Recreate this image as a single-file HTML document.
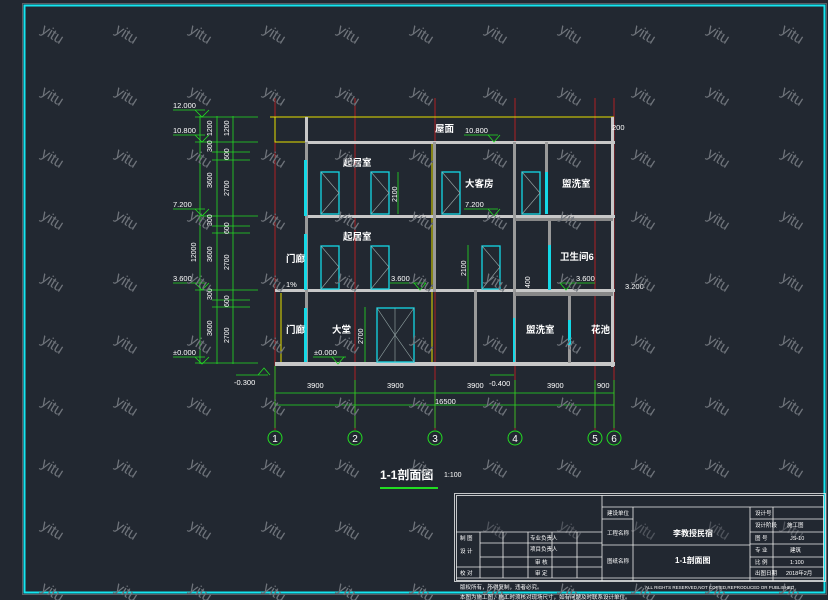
<!DOCTYPE html>
<html><head><meta charset="utf-8"><style>
html,body{margin:0;padding:0;background:#222831;}
svg{display:block;}
text{font-family:"Liberation Sans","Noto Sans CJK SC",sans-serif;}
</style></head><body>
<svg width="828" height="600" viewBox="0 0 828 600" xmlns="http://www.w3.org/2000/svg">
<defs>
<pattern id="wm" x="0" y="0" width="74" height="62" patternUnits="userSpaceOnUse">
<text x="0" y="0" transform="translate(40,32) rotate(32)" font-size="15" fill="#6f747b" font-family="Liberation Sans, sans-serif">yitu</text>
</pattern>
</defs>
<rect width="828" height="600" fill="#222831"/>
<rect x="22.5" y="3.5" width="804" height="591" fill="none" stroke="#5a5f66" stroke-width="1"/>
<rect x="24.5" y="5.5" width="800" height="587" fill="none" stroke="#14e6f0" stroke-width="2"/>

<!-- axis lines red -->
<g stroke="#d42020" stroke-width="0.8">
<line x1="275" y1="98" x2="275" y2="430"/><line x1="355" y1="98" x2="355" y2="430"/>
<line x1="435" y1="98" x2="435" y2="430"/><line x1="515" y1="98" x2="515" y2="430"/>
<line x1="595" y1="98" x2="595" y2="430"/><line x1="614" y1="98" x2="614" y2="430"/>
</g>

<!-- roof parapet yellow -->
<g fill="none" stroke="#e8e000" stroke-width="1">
<line x1="270" y1="117" x2="614" y2="117"/>
<polyline points="275,117 275,142 305,142"/>
<line x1="432" y1="142" x2="432" y2="363"/>
<line x1="281" y1="293" x2="281" y2="362"/>
</g>
<!-- slabs -->
<g fill="#c8c8c8">
<rect x="305" y="141" width="310" height="3"/>
<rect x="305" y="215" width="310" height="3"/>
<rect x="275" y="289" width="340" height="3"/>
<rect x="275" y="362" width="340" height="4"/>
<rect x="305" y="117" width="3" height="25"/>
<rect x="611" y="117" width="3" height="250"/>
<rect x="305" y="142" width="3" height="220" fill="#9a9a9a"/>
<rect x="433" y="142" width="3" height="150" fill="#9a9a9a"/>
<rect x="513" y="142" width="3" height="220" fill="#9a9a9a"/>
<rect x="545" y="142" width="3" height="70" fill="#9a9a9a"/>
<rect x="548" y="218" width="3" height="72" fill="#9a9a9a"/>
<rect x="474" y="290" width="3" height="72" fill="#9a9a9a"/>
<rect x="568" y="295" width="3" height="68" fill="#9a9a9a"/>
<rect x="515" y="292" width="98" height="4" fill="#888"/>
<rect x="515" y="218" width="98" height="3" fill="#888"/>
</g>
<!-- cyan wall windows -->
<g fill="#14d8e6">
<rect x="304" y="160" width="3" height="56"/>
<rect x="304" y="234" width="3" height="56"/>
<rect x="304" y="308" width="3" height="54"/>
<rect x="545" y="172" width="3" height="42"/>
<rect x="548" y="245" width="3" height="45"/>
<rect x="513" y="318" width="2" height="44"/>
<rect x="568" y="320" width="3" height="25"/>
</g>
<!-- windows -->
<g fill="none" stroke="#14d8e6" stroke-width="1.3">
<rect x="321" y="172" width="18" height="42"/><rect x="371" y="172" width="18" height="42"/>
<rect x="442" y="172" width="18" height="42"/><rect x="522" y="172" width="18" height="42"/>
<rect x="321" y="246" width="18" height="43"/><rect x="371" y="246" width="18" height="43"/>
<rect x="482" y="246" width="18" height="43"/>
<rect x="377" y="308" width="37" height="54"/>
</g>
<g fill="none" stroke="#9aa" stroke-width="0.6">
<polyline points="321,172 339,193 321,214"/><polyline points="371,172 389,193 371,214"/>
<polyline points="442,172 460,193 442,214"/><polyline points="522,172 540,193 522,214"/>
<polyline points="321,246 339,267 321,289"/><polyline points="371,246 389,267 371,289"/>
<polyline points="482,246 500,267 482,289"/>
<line x1="395" y1="308" x2="395" y2="362"/>
<polyline points="377,308 395,335 377,362"/><polyline points="414,308 395,335 414,362"/>
</g>

<!-- dims green -->
<g stroke="#22dd22" stroke-width="0.8" fill="none">
<line x1="200" y1="116" x2="200" y2="364"/><line x1="217" y1="116" x2="217" y2="364"/><line x1="233" y1="116" x2="233" y2="364"/>
<line x1="195" y1="117" x2="258" y2="117"/><line x1="195" y1="142" x2="258" y2="142"/>
<line x1="195" y1="216" x2="258" y2="216"/><line x1="195" y1="290" x2="258" y2="290"/>
<line x1="195" y1="363" x2="258" y2="363"/>
<line x1="212" y1="152" x2="250" y2="152"/><line x1="212" y1="160" x2="250" y2="160"/>
<line x1="212" y1="226" x2="250" y2="226"/><line x1="212" y1="233" x2="250" y2="233"/>
<line x1="212" y1="300" x2="250" y2="300"/><line x1="212" y1="307" x2="250" y2="307"/>
<line x1="173" y1="110" x2="205" y2="110"/><polyline points="195,110 202,117 209,110"/>
<line x1="173" y1="135" x2="205" y2="135"/><polyline points="195,135 202,142 209,135"/>
<line x1="173" y1="209" x2="205" y2="209"/><polyline points="195,209 202,216 209,209"/>
<line x1="173" y1="283" x2="205" y2="283"/><polyline points="195,283 202,290 209,283"/>
<line x1="173" y1="357" x2="205" y2="357"/><polyline points="195,357 202,364 209,357"/>
<line x1="275" y1="393" x2="614" y2="393"/><line x1="275" y1="405" x2="614" y2="405"/>
<line x1="275" y1="366" x2="275" y2="428"/><line x1="355" y1="380" x2="355" y2="428"/>
<line x1="435" y1="380" x2="435" y2="428"/><line x1="515" y1="380" x2="515" y2="428"/>
<line x1="595" y1="380" x2="595" y2="428"/><line x1="614" y1="380" x2="614" y2="428"/>
<line x1="398" y1="172" x2="398" y2="214"/><line x1="468" y1="245" x2="468" y2="289"/>
<line x1="365" y1="307" x2="365" y2="362"/>
<line x1="464" y1="135" x2="498" y2="135"/><polyline points="488,135 494,142 500,135"/>
<line x1="464" y1="209" x2="498" y2="209"/><polyline points="488,209 494,216 500,209"/>
<line x1="390" y1="283" x2="426" y2="283"/><polyline points="414,283 420,290 426,283"/>
<line x1="560" y1="283" x2="595" y2="283"/><polyline points="560,283 566,290 572,283"/>
<line x1="313" y1="357" x2="346" y2="357"/><polyline points="332,357 338,364 344,357"/>
<line x1="236" y1="375" x2="268" y2="375"/><polyline points="258,375 264,368 270,375"/>
<line x1="490" y1="375" x2="514" y2="375"/>
<line x1="380" y1="488" x2="438" y2="488" stroke-width="2"/>
</g>
<g fill="none" stroke="#22dd22" stroke-width="1">
<circle cx="275" cy="438" r="7"/><circle cx="355" cy="438" r="7"/><circle cx="435" cy="438" r="7"/>
<circle cx="515" cy="438" r="7"/><circle cx="595" cy="438" r="7"/><circle cx="614" cy="438" r="7"/>
</g>
<g fill="#fff" font-size="10" text-anchor="middle">
<text x="275" y="442">1</text><text x="355" y="442">2</text><text x="435" y="442">3</text>
<text x="515" y="442">4</text><text x="595" y="442">5</text><text x="614" y="442">6</text>
</g>

<!-- level texts -->
<g fill="#fff" font-size="7.5">
<text x="173" y="108">12.000</text><text x="173" y="133">10.800</text>
<text x="173" y="207">7.200</text><text x="173" y="281">3.600</text><text x="173" y="355">±0.000</text>
<text x="234" y="385">-0.300</text>
<text x="465" y="133">10.800</text><text x="465" y="207">7.200</text>
<text x="391" y="281">3.600</text><text x="576" y="281">3.600</text>
<text x="314" y="355">±0.000</text><text x="489" y="386">-0.400</text>
<text x="625" y="289">3.200</text><text x="286" y="287">1%</text><text x="612" y="130">200</text>
<text x="307" y="388">3900</text><text x="387" y="388">3900</text><text x="467" y="388">3900</text>
<text x="547" y="388">3900</text><text x="597" y="388">900</text><text x="435" y="404">16500</text>
</g>
<g fill="#fff" font-size="7" >
<text transform="translate(212,136) rotate(-90)">1200</text><text transform="translate(229,136) rotate(-90)">1200</text>
<text transform="translate(212,188) rotate(-90)">3600</text><text transform="translate(229,196) rotate(-90)">2700</text>
<text transform="translate(212,152) rotate(-90)">300</text><text transform="translate(229,160) rotate(-90)">600</text>
<text transform="translate(196,262) rotate(-90)">12000</text>
<text transform="translate(212,262) rotate(-90)">3600</text><text transform="translate(229,270) rotate(-90)">2700</text>
<text transform="translate(212,226) rotate(-90)">300</text><text transform="translate(229,234) rotate(-90)">600</text>
<text transform="translate(212,336) rotate(-90)">3600</text><text transform="translate(229,343) rotate(-90)">2700</text>
<text transform="translate(212,300) rotate(-90)">300</text><text transform="translate(229,307) rotate(-90)">600</text>
<text transform="translate(397,202) rotate(-90)">2100</text><text transform="translate(466,276) rotate(-90)">2100</text>
<text transform="translate(363,344) rotate(-90)">2700</text><text transform="translate(530,288) rotate(-90)">400</text>
</g>
<g fill="#fff" font-size="9.5" font-weight="bold">
<text x="435" y="132">屋面</text><text x="343" y="166">起居室</text><text x="465" y="187">大客房</text>
<text x="562" y="187">盥洗室</text><text x="343" y="240">起居室</text><text x="286" y="262">门廊</text>
<text x="560" y="260">卫生间6</text><text x="286" y="333">门廊</text><text x="332" y="333">大堂</text>
<text x="526" y="333">盥洗室</text><text x="591" y="333">花池</text>
</g>
<text x="380" y="479" fill="#fff" font-size="12" font-weight="bold">1-1剖面图</text>
<text x="444" y="477" fill="#fff" font-size="7">1:100</text>

<rect width="828" height="600" fill="url(#wm)"/>

<!-- title block -->
<g stroke="#eee" stroke-width="0.8" fill="none">
<rect x="454.5" y="493.5" width="371" height="88"/>
<rect x="456.5" y="495.5" width="367" height="85" fill="#222831" fill-opacity="0.4"/>
<line x1="602" y1="495" x2="602" y2="581"/>
<line x1="602" y1="507" x2="824" y2="507"/>
<line x1="633" y1="507" x2="633" y2="581"/><line x1="750" y1="507" x2="750" y2="581"/><line x1="773" y1="507" x2="773" y2="581"/>
<line x1="750" y1="519" x2="824" y2="519"/><line x1="602" y1="519" x2="633" y2="519"/>
<line x1="750" y1="532" x2="824" y2="532"/><line x1="602" y1="545" x2="750" y2="545"/>
<line x1="750" y1="544" x2="824" y2="544"/><line x1="750" y1="557" x2="824" y2="557"/>
<line x1="750" y1="567" x2="824" y2="567"/>
<line x1="456" y1="532" x2="602" y2="532"/><line x1="480" y1="543" x2="602" y2="543"/>
<line x1="480" y1="557" x2="602" y2="557"/><line x1="456" y1="567" x2="602" y2="567"/>
<line x1="456" y1="578" x2="824" y2="578"/>
<line x1="480" y1="532" x2="480" y2="578"/><line x1="503" y1="532" x2="503" y2="578"/>
<line x1="528" y1="532" x2="528" y2="578"/><line x1="552" y1="532" x2="552" y2="578"/><line x1="577" y1="532" x2="577" y2="578"/>
</g>
<g fill="#fff" font-size="5.5">
<text x="607" y="515">建设单位</text><text x="607" y="535">工程名称</text><text x="607" y="563">图纸名称</text>
<text x="755" y="515">设计号</text><text x="755" y="527">设计阶段</text><text x="755" y="540">图 号</text>
<text x="755" y="552">专 业</text><text x="755" y="564">比 例</text><text x="755" y="575">出图日期</text>
<text x="787" y="527">施工图</text><text x="790" y="540">JS-10</text><text x="790" y="552">建筑</text>
<text x="790" y="564">1:100</text><text x="786" y="575">2018年2月</text>
<text x="460" y="540">制 图</text><text x="460" y="553">设 计</text><text x="460" y="575">校 对</text>
<text x="530" y="540">专业负责人</text><text x="530" y="551">项目负责人</text><text x="535" y="564">审 核</text><text x="535" y="575">审 定</text>
<text x="460" y="589">版权所有，不得复制，违者必究。</text>
<text x="645" y="589" font-size="4.5">ALL RIGHTS RESERVED,NOT COPIED,REPRODUCED OR PUBLISHED</text>
<text x="460" y="599">本图为施工图，施工时须核对现场尺寸，如有问题及时联系设计单位。</text>
</g>
<g fill="#fff" font-size="8" font-weight="bold">
<text x="673" y="536">李教授民宿</text><text x="675" y="563">1-1剖面图</text>
</g>
</svg>
</body></html>
